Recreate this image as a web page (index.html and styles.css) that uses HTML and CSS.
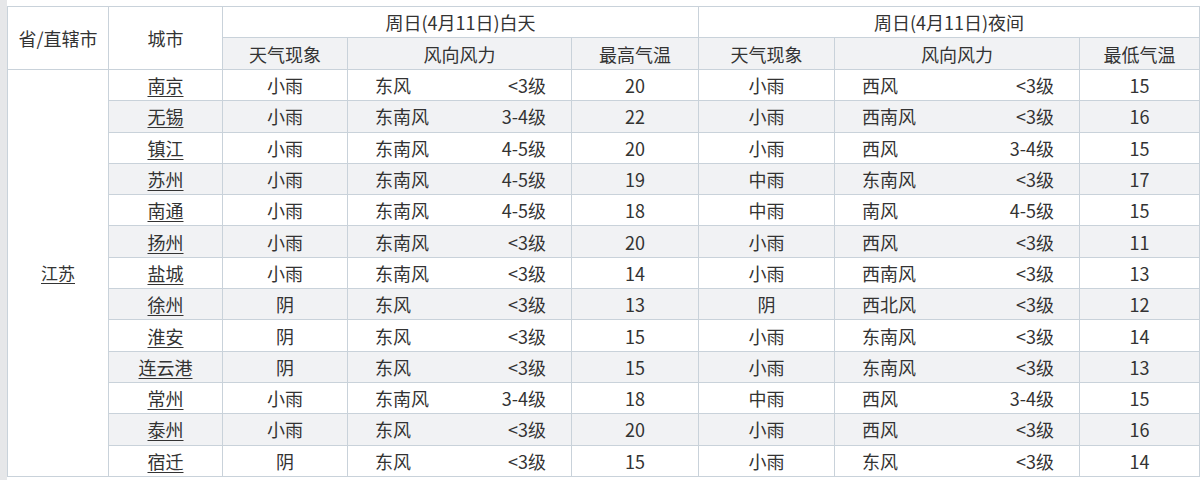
FILE: index.html
```html
<!DOCTYPE html>
<html lang="zh-CN">
<head>
<meta charset="utf-8">
<title>江苏天气预报</title>
<link rel="stylesheet" href="styles.css">
</head>
<body>
<div class="page">
<table class="weather">
  <colgroup>
    <col class="c-prov"><col class="c-city"><col class="c-wx"><col class="c-wind-d"><col class="c-temp-d"><col class="c-wx2"><col class="c-wind-n"><col class="c-temp-n">
  </colgroup>
  <thead>
    <tr class="h1">
      <th rowspan="2">省/直辖市</th>
      <th rowspan="2">城市</th>
      <th colspan="3">周日(4月11日)白天</th>
      <th colspan="3">周日(4月11日)夜间</th>
    </tr>
    <tr class="h2">
      <th>天气现象</th><th>风向风力</th><th>最高气温</th>
      <th>天气现象</th><th>风向风力</th><th>最低气温</th>
    </tr>
  </thead>
  <tbody>
    <tr>
      <td rowspan="13" class="prov"><a href="#">江苏</a></td>
      <td><a href="#">南京</a></td><td>小雨</td><td><div class="wind"><span>东风</span><span>&lt;3级</span></div></td><td>20</td>
      <td>小雨</td><td><div class="wind"><span>西风</span><span>&lt;3级</span></div></td><td>15</td>
    </tr>
    <tr class="alt">
      <td><a href="#">无锡</a></td><td>小雨</td><td><div class="wind"><span>东南风</span><span>3-4级</span></div></td><td>22</td>
      <td>小雨</td><td><div class="wind"><span>西南风</span><span>&lt;3级</span></div></td><td>16</td>
    </tr>
    <tr>
      <td><a href="#">镇江</a></td><td>小雨</td><td><div class="wind"><span>东南风</span><span>4-5级</span></div></td><td>20</td>
      <td>小雨</td><td><div class="wind"><span>西风</span><span>3-4级</span></div></td><td>15</td>
    </tr>
    <tr class="alt">
      <td><a href="#">苏州</a></td><td>小雨</td><td><div class="wind"><span>东南风</span><span>4-5级</span></div></td><td>19</td>
      <td>中雨</td><td><div class="wind"><span>东南风</span><span>&lt;3级</span></div></td><td>17</td>
    </tr>
    <tr>
      <td><a href="#">南通</a></td><td>小雨</td><td><div class="wind"><span>东南风</span><span>4-5级</span></div></td><td>18</td>
      <td>中雨</td><td><div class="wind"><span>南风</span><span>4-5级</span></div></td><td>15</td>
    </tr>
    <tr class="alt">
      <td><a href="#">扬州</a></td><td>小雨</td><td><div class="wind"><span>东南风</span><span>&lt;3级</span></div></td><td>20</td>
      <td>小雨</td><td><div class="wind"><span>西风</span><span>&lt;3级</span></div></td><td>11</td>
    </tr>
    <tr>
      <td><a href="#">盐城</a></td><td>小雨</td><td><div class="wind"><span>东南风</span><span>&lt;3级</span></div></td><td>14</td>
      <td>小雨</td><td><div class="wind"><span>西南风</span><span>&lt;3级</span></div></td><td>13</td>
    </tr>
    <tr class="alt">
      <td><a href="#">徐州</a></td><td>阴</td><td><div class="wind"><span>东风</span><span>&lt;3级</span></div></td><td>13</td>
      <td>阴</td><td><div class="wind"><span>西北风</span><span>&lt;3级</span></div></td><td>12</td>
    </tr>
    <tr>
      <td><a href="#">淮安</a></td><td>阴</td><td><div class="wind"><span>东风</span><span>&lt;3级</span></div></td><td>15</td>
      <td>小雨</td><td><div class="wind"><span>东南风</span><span>&lt;3级</span></div></td><td>14</td>
    </tr>
    <tr class="alt">
      <td><a href="#">连云港</a></td><td>阴</td><td><div class="wind"><span>东风</span><span>&lt;3级</span></div></td><td>15</td>
      <td>小雨</td><td><div class="wind"><span>东南风</span><span>&lt;3级</span></div></td><td>13</td>
    </tr>
    <tr>
      <td><a href="#">常州</a></td><td>小雨</td><td><div class="wind"><span>东南风</span><span>3-4级</span></div></td><td>18</td>
      <td>中雨</td><td><div class="wind"><span>西风</span><span>3-4级</span></div></td><td>15</td>
    </tr>
    <tr class="alt">
      <td><a href="#">泰州</a></td><td>小雨</td><td><div class="wind"><span>东风</span><span>&lt;3级</span></div></td><td>20</td>
      <td>小雨</td><td><div class="wind"><span>西风</span><span>&lt;3级</span></div></td><td>16</td>
    </tr>
    <tr>
      <td><a href="#">宿迁</a></td><td>阴</td><td><div class="wind"><span>东风</span><span>&lt;3级</span></div></td><td>15</td>
      <td>小雨</td><td><div class="wind"><span>东风</span><span>&lt;3级</span></div></td><td>14</td>
    </tr>
  </tbody>
</table>
</div>
</body>
</html>
```

FILE: styles.css
```css
html, body {
  margin: 0;
  padding: 0;
  background: #ffffff;
}

body {
  font-family: "Noto Sans CJK SC", "Noto Sans", "DejaVu Sans", sans-serif;
  color: #333333;
}

.page {
  border-left: 7px solid #e6e7e9;
  padding-top: 6px;
  min-height: 480px;
  box-sizing: border-box;
}

.weather {
  border-collapse: collapse;
  table-layout: fixed;
  width: 1192px;
  font-size: 18px;
  line-height: 22px;
}

.c-prov { width: 101px; }
.c-city { width: 114px; }
.c-wx { width: 125px; }
.c-wind-d { width: 224px; }
.c-temp-d { width: 127px; }
.c-wx2 { width: 136px; }
.c-wind-n { width: 245px; }
.c-temp-n { width: 120px; }

.weather th,
.weather td {
  border: 1px solid #c9d2da;
  padding: 0;
  text-align: center;
  vertical-align: middle;
  font-weight: normal;
}

.weather .h1 { height: 31px; }
.weather .h2 { height: 32px; }
.weather .h2 th { background: #f1f2f4; }

.weather tbody tr { height: 31.3px; }
.weather tbody tr.alt td { background: #f1f2f4; }
.weather tbody tr.alt td.prov { background: #ffffff; }

.weather a {
  color: #333333;
  text-decoration: underline;
  text-underline-offset: 3px;
  text-decoration-thickness: 1px;
}

.weather td.prov { font-size: 17px; }

.wind {
  display: flex;
  justify-content: space-between;
  padding: 0 25px 0 27px;
}
```
